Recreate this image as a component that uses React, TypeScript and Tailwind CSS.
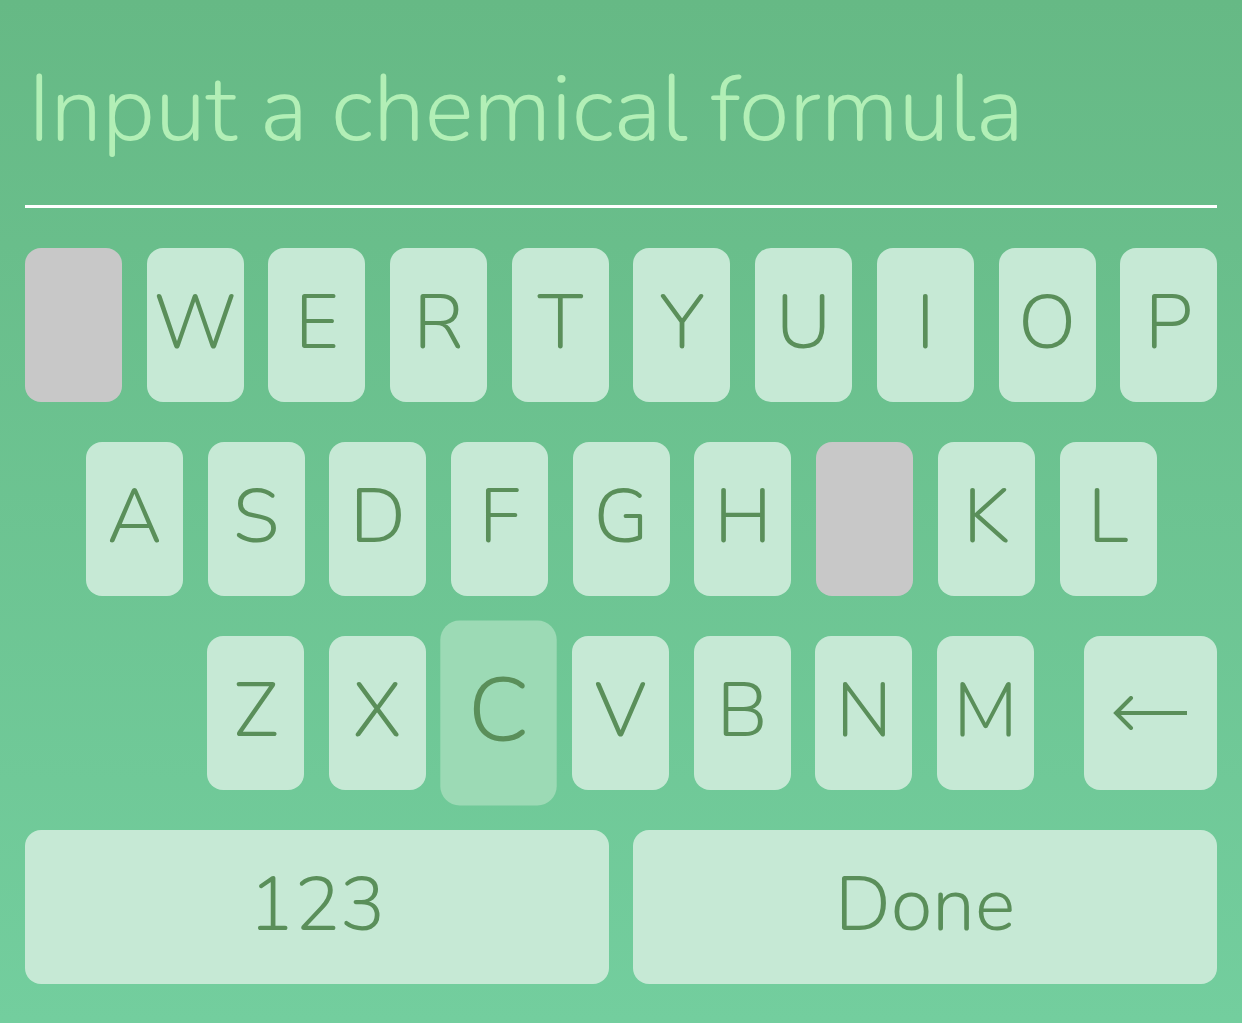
const row1 = ["", "W", "E", "R", "T", "Y", "U", "I", "O", "P"];
const row2 = ["A", "S", "D", "F", "G", "H", "", "K", "L"];
const row3 = ["Z", "X", "C", "V", "B", "N", "M"];

function Key({ label, pressed }: { label: string; pressed?: boolean }) {
  if (label === "") {
    return <div className="w-[97px] h-[154px] shrink-0 rounded-[16px] bg-[#c8c8c8]" />;
  }
  return (
    <div
      className={
        pressed
          ? "w-[97px] h-[154px] shrink-0 rounded-[16px] bg-[#9cdab5] flex items-center justify-center scale-[1.2]"
          : "w-[97px] h-[154px] shrink-0 rounded-[16px] bg-[#c6e9d5] flex items-center justify-center"
      }
    >
      <span className="text-[76px] leading-none font-light text-[#5a8f5a] -mt-[4px]">{label}</span>
    </div>
  );
}

export default function App() {
  return (
    <div
      className="w-[1242px] h-[1023px] bg-gradient-to-b from-[#66b985] to-[#73ce9e] px-[25px] pt-[40px] overflow-hidden"
      style={{ fontFamily: '"Nunito", "Lato", "Open Sans", sans-serif' }}
    >
      {/* Input */}
      <div className="border-b-[3px] border-white h-[168px] flex items-start">
        <div className="text-[92px] font-light leading-none text-[#b2efb6] pl-[3px] pt-[24px]">
          Input a chemical formula
        </div>
      </div>

      {/* Keyboard */}
      <div className="flex flex-col gap-[40px] pt-[40px]">
        <div className="flex gap-[24.7px]">
          {row1.map((k, i) => (
            <Key key={i} label={k} />
          ))}
        </div>
        <div className="flex gap-[24.7px] pl-[61px]">
          {row2.map((k, i) => (
            <Key key={i} label={k} />
          ))}
        </div>
        <div className="flex gap-[24.7px] pl-[182px]">
          {row3.map((k, i) => (
            <Key key={i} label={k} pressed={k === "C"} />
          ))}
          <div className="ml-auto w-[133px] h-[154px] rounded-[16px] bg-[#c6e9d5] flex items-center justify-center">
            <svg width="76" height="34" viewBox="0 0 76 34" fill="none" stroke="#5a8f5a" strokeWidth="4">
              <path d="M74 17H3" />
              <path d="M18 2L3 17L18 32" strokeLinecap="round" />
            </svg>
          </div>
        </div>
        <div className="flex gap-[24px]">
          <div className="flex-1 h-[154px] rounded-[16px] bg-[#c6e9d5] flex items-center justify-center">
            <span className="text-[76px] leading-none font-light text-[#5a8f5a] -mt-[4px]">123</span>
          </div>
          <div className="flex-1 h-[154px] rounded-[16px] bg-[#c6e9d5] flex items-center justify-center">
            <span className="text-[76px] leading-none font-light text-[#5a8f5a] -mt-[4px]">Done</span>
          </div>
        </div>
      </div>
    </div>
  );
}
